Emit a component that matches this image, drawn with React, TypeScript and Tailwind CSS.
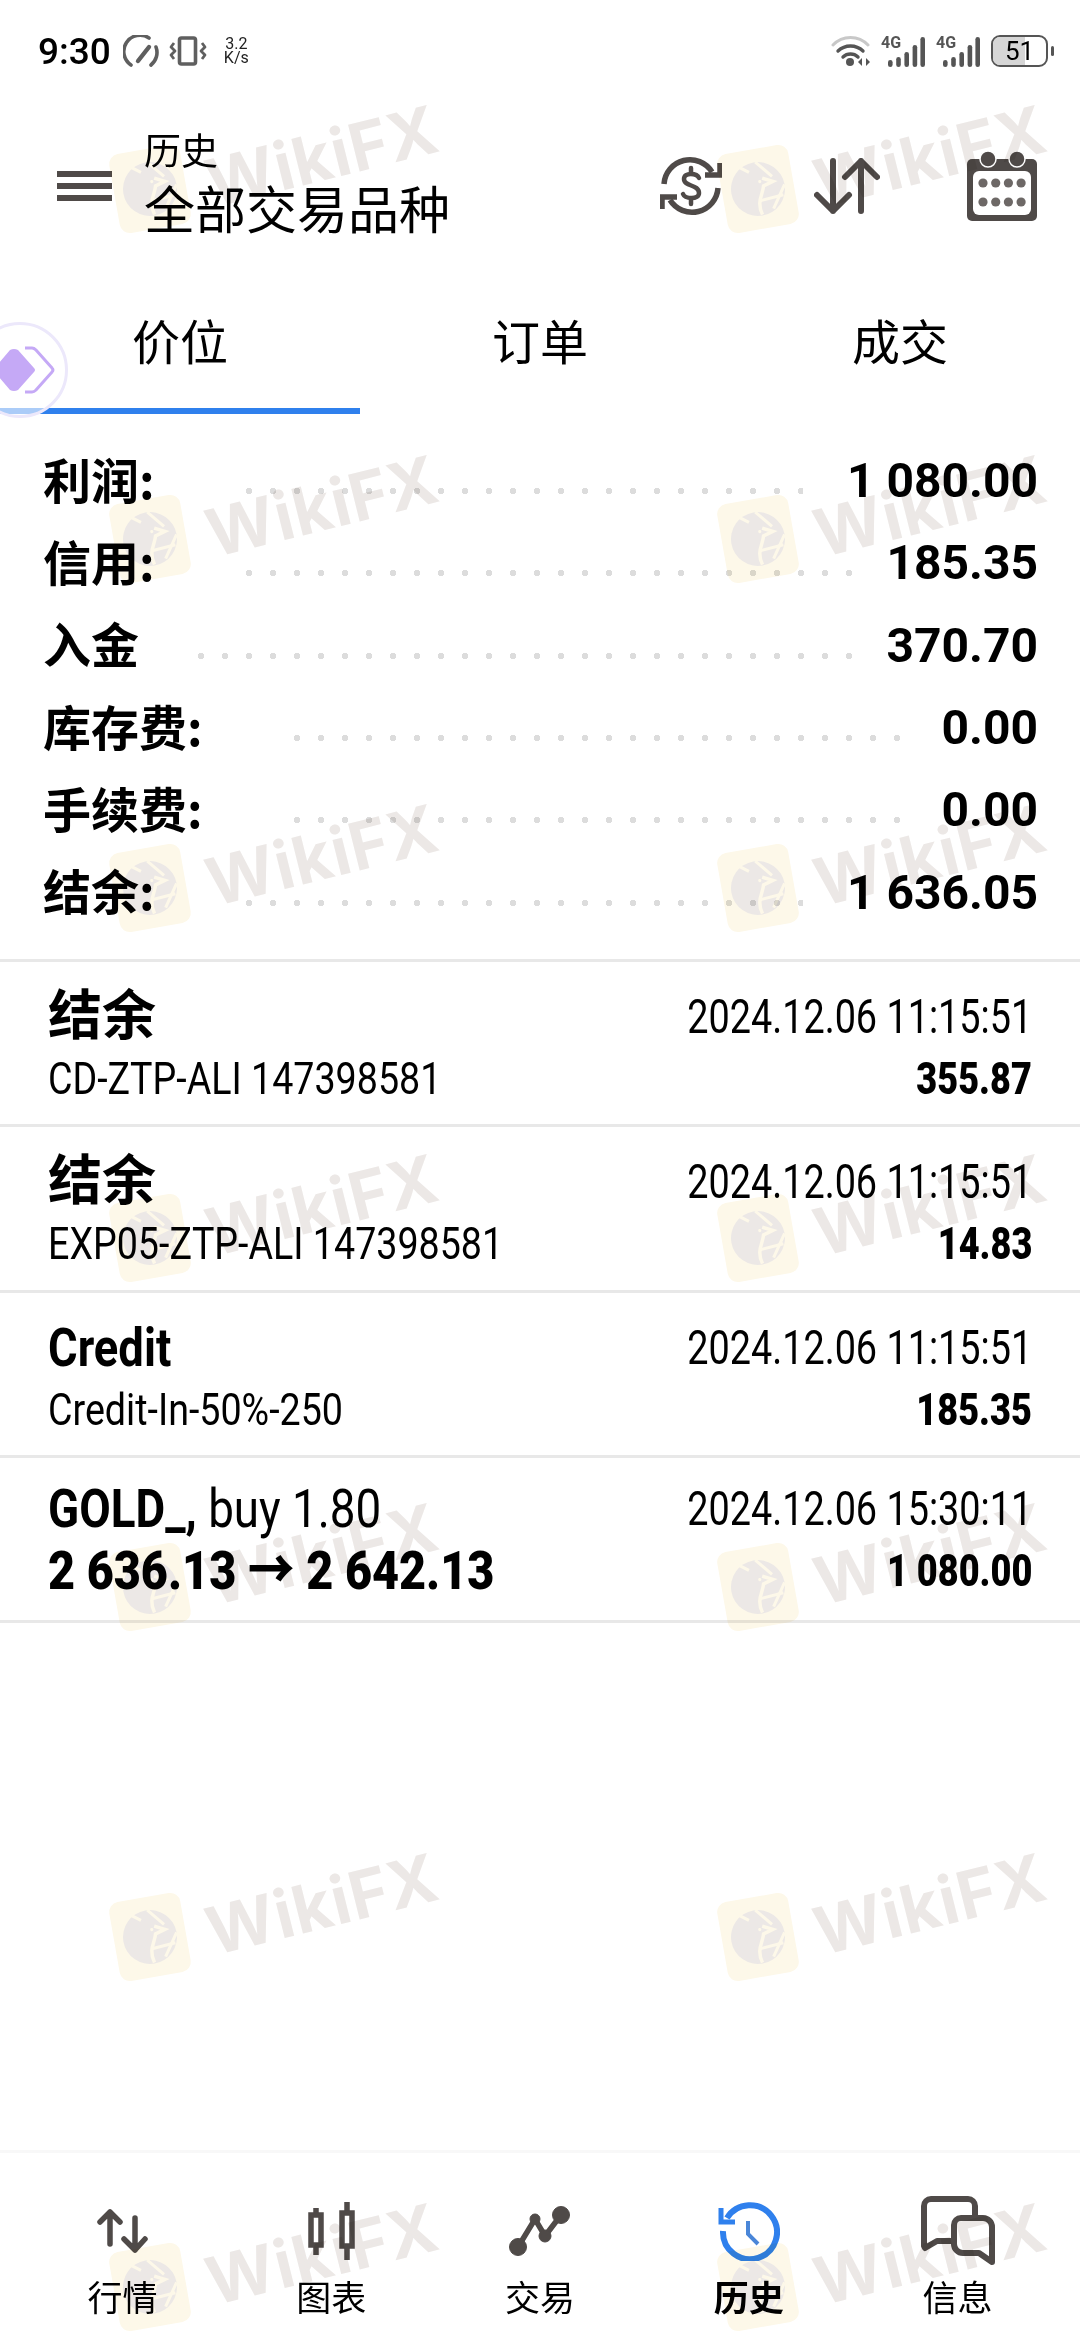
import React from 'react';

const latin = "font-['Roboto','Noto_Sans_CJK_SC',sans-serif]";
const cjk = "font-['Noto_Sans_CJK_SC',sans-serif]";

const summary = [
  { label: '利润:', value: '1 080.00', lead: 'ml-[82px] mr-[44px]' },
  { label: '信用:', value: '185.35', lead: 'ml-[82px] mr-[30px]' },
  { label: '入金', value: '370.70', lead: 'ml-[50px] mr-[30px]' },
  { label: '库存费:', value: '0.00', lead: 'ml-[82px] mr-[30px]' },
  { label: '手续费:', value: '0.00', lead: 'ml-[82px] mr-[30px]' },
  { label: '结余:', value: '1 636.05', lead: 'ml-[82px] mr-[44px]' },
];

const deals = [
  { title: '结余', sub: 'CD-ZTP-ALI 147398581', date: '2024.12.06 11:15:51', amount: '355.87', scaled: false },
  { title: '结余', sub: 'EXP05-ZTP-ALI 147398581', date: '2024.12.06 11:15:51', amount: '14.83', scaled: false },
  { title: 'Credit', sub: 'Credit-In-50%-250', date: '2024.12.06 11:15:51', amount: '185.35', scaled: true },
];

const SpeedIcon = () => (
  <svg width="36" height="32" viewBox="0 0 36 32" fill="none" stroke="#5f5f5f" strokeWidth="3.6" strokeLinecap="round">
    <path d="M8 30 A16 16 0 0 1 26 3" />
    <path d="M33 12 A16 16 0 0 1 28 30" />
    <path d="M15 26 L26 12" strokeWidth="4.4" />
  </svg>
);

const VibrateIcon = () => (
  <svg width="38" height="30" viewBox="0 0 38 30" fill="none" stroke="#5f5f5f" strokeWidth="2.8">
    <rect x="10.5" y="2" width="16" height="26" rx="2" strokeWidth="3.6" />
    <path d="M5 7 L2 11 L6 15 L2 19 L5 23" strokeLinejoin="round" />
    <path d="M33 7 L36 11 L32 15 L36 19 L33 23" strokeLinejoin="round" />
  </svg>
);

const WifiIcon = () => (
  <svg width="40" height="32" viewBox="0 0 40 32" fill="none" strokeLinecap="round">
    <path d="M2 10 A24 24 0 0 1 37 10" stroke="#c8c8c8" strokeWidth="3" />
    <path d="M7 16 A18 18 0 0 1 32 16" stroke="#555" strokeWidth="3.4" />
    <path d="M12 22 A11 11 0 0 1 27 22" stroke="#555" strokeWidth="3.4" />
    <circle cx="19" cy="27" r="4" fill="#555" />
    <path d="M27 27 L31 23 V31 Z M35 23 L39 27 L35 31 Z" fill="#555" />
  </svg>
);

const SignalIcon = () => (
  <div className="relative w-[44px] h-[31px]">
    <svg width="44" height="31" viewBox="0 0 44 31" fill="#555">
      <rect x="7" y="24" width="4.6" height="7" rx="2.3" />
      <rect x="15.2" y="21" width="4.6" height="10" rx="2.3" />
      <rect x="23.4" y="16" width="4.6" height="15" rx="2.3" />
      <rect x="31.6" y="9" width="4.6" height="22" rx="2.3" />
      <rect x="39.4" y="1" width="4.6" height="30" rx="2.3" />
    </svg>
    <span className={`absolute left-0 top-[-1px] text-[16px] leading-[16px] font-bold text-[#555] ${latin}`}>4G</span>
  </div>
);

const Battery = () => (
  <div className="flex items-center gap-[3px]">
    <div className="relative w-[57px] h-[32px] rounded-[9px] border-2 border-[#555] flex items-center justify-center">
      <div className="absolute left-0 top-0 bottom-0 w-[32px] rounded-l-[7px] bg-[#d6d6d6]" />
      <span className={`relative text-[26px] leading-[28px] text-black ${latin}`}>51</span>
    </div>
    <div className="w-[3px] h-[10px] rounded-full bg-[#555]" />
  </div>
);

const ExchangeIcon = () => (
  <svg width="62" height="62" viewBox="0 0 62 62" fill="none" stroke="#4f4a48" strokeWidth="5.5">
    <path d="M4 29 A26 26 0 0 1 52 17" />
    <path d="M58 33 A26 26 0 0 1 10 45" />
    <path d="M60 8 V20 H45" />
    <path d="M2 54 V42 H17" />
    <path d="M39 23 C37 18 24 17 24 24 C24 32 39 29 39 38 C39 45 25 44 23 39" strokeWidth="4.5" strokeLinecap="round" />
    <path d="M31 13 V17 M31 45 V49" strokeWidth="4.5" strokeLinecap="round" />
  </svg>
);

const SortIcon = () => (
  <svg width="66" height="56" viewBox="0 0 66 56" fill="none" stroke="#4f4a48" strokeWidth="6" strokeLinecap="round" strokeLinejoin="round">
    <path d="M19 3 V53 M3 37 L19 53 L35 37" />
    <path d="M47 53 V3 M31 19 L47 3 L63 19" />
  </svg>
);

const CalendarIcon = () => (
  <svg width="70" height="70" viewBox="0 0 70 70">
    <rect x="0" y="8" width="70" height="62" rx="5" fill="#4f4a48" />
    <circle cx="21" cy="8" r="8" fill="#4f4a48" stroke="#fff" strokeWidth="1.5" />
    <circle cx="50" cy="8" r="8" fill="#4f4a48" stroke="#fff" strokeWidth="1.5" />
    <rect x="6" y="20" width="58" height="44" rx="6" fill="#fff" />
    {[0, 1, 2, 3].map(i => (
      <g key={i} fill="#6d6866">
        <circle cx={16 + i * 12.7} cy="32" r="4.6" />
        <circle cx={16 + i * 12.7} cy="51" r="4.6" />
      </g>
    ))}
  </svg>
);

const QuotesIcon = () => (
  <svg width="51" height="44" viewBox="0 0 51 44" fill="none" stroke="#4f4a48" strokeWidth="5.5" strokeLinecap="round" strokeLinejoin="round">
    <path d="M13 3 V35 M3 13 L13 3 L23 13" />
    <path d="M38 9 V41 M27 30 L38 41 L48 30" />
  </svg>
);

const ChartIcon = () => (
  <svg width="47" height="58" viewBox="0 0 47 58" fill="none" stroke="#4f4a48" strokeWidth="5.5">
    <path d="M8 6 V13 M8 43 V53" />
    <rect x="3" y="13" width="10" height="30" />
    <path d="M39 0 V11 M39 44 V58" />
    <rect x="34" y="11" width="10" height="33" />
  </svg>
);

const TradeIcon = () => (
  <svg width="62" height="50" viewBox="0 0 62 50" fill="#4f4a48" stroke="#4f4a48">
    <path d="M9 41 L26 13 L36 30 L52 9" fill="none" strokeWidth="5.5" />
    <circle cx="9" cy="41" r="8.5" />
    <circle cx="26" cy="13" r="5" />
    <circle cx="36" cy="30" r="6" />
    <circle cx="52" cy="9" r="8.5" />
  </svg>
);

const HistoryIcon = () => (
  <svg width="62" height="60" viewBox="0 0 62 60" fill="none" stroke="#2f80ed" strokeWidth="6">
    <path d="M9 17 A27 27 0 1 1 5 30" />
    <path d="M3 7 V21 H17" strokeWidth="5" />
    <path d="M30 20 V33 L40 43" stroke="#4a86d8" strokeWidth="4" />
  </svg>
);

const MessagesIcon = () => (
  <svg width="74" height="70" viewBox="0 0 74 70" fill="none" stroke="#4f4a48" strokeWidth="6" strokeLinejoin="round">
    <path d="M54 22 V10 A7 7 0 0 0 47 3 H10 A7 7 0 0 0 3 10 V50 L4 52 L16 45 H30" />
    <path d="M40 22 H62 A9 9 0 0 1 71 31 V66 L58 57 H42 A9 9 0 0 1 33 48 V29 A7 7 0 0 1 40 22 Z" />
  </svg>
);

const EagleBadge = () => (
  <svg width="56" height="56" viewBox="0 0 56 56">
    <circle cx="28" cy="28" r="27" fill="#ece8e6" />
    <path d="M30 1 L44 18 M55 28 L40 50 M14 4 L22 10" stroke="#fdf8e9" strokeWidth="3" />
    <path d="M34 18 L44 23 L34 26 C32 34 24 40 28 54" fill="none" stroke="#fdf8e9" strokeWidth="3.5" />
    <path d="M28 40 L52 38" stroke="#fdf8e9" strokeWidth="3" />
    <circle cx="31" cy="21" r="1.6" fill="#fdf8e9" />
  </svg>
);

const Watermark = () => (
  <div className="relative h-[349.6px]">
    <div className="absolute left-0 top-[109px] w-[72px] h-[80px] rounded-[10px] bg-[#fdf8e9] -rotate-[10deg] flex items-center justify-center">
      <EagleBadge />
    </div>
    <div className="absolute left-[88px] top-[76px] w-[240px] text-center text-[66px] leading-[80px] font-bold tracking-[1px] text-[#ece8e6] -rotate-[14deg] font-['Inter',sans-serif]">
      WikiFX
    </div>
  </div>
);

export default function App() {
  return (
    <div className={`relative w-[1080px] h-[2340px] bg-white overflow-hidden flex flex-col text-black ${cjk}`}>
      {/* Status bar */}
      <div className="h-[102px] pl-[38px] pr-[26px] flex items-center justify-between">
        <div className="flex items-center">
          <span className={`text-[37px] leading-none font-medium ${latin}`}>9:30</span>
          <span className="ml-[12px]"><SpeedIcon /></span>
          <span className="ml-[10px]"><VibrateIcon /></span>
          <div className={`ml-[17px] flex flex-col items-center text-[16px] leading-[14px] text-[#222] ${latin}`}>
            <span>3.2</span>
            <span>K/s</span>
          </div>
        </div>
        <div className="flex items-center">
          <WifiIcon />
          <span className="ml-[10px]"><SignalIcon /></span>
          <span className="ml-[11px]"><SignalIcon /></span>
          <span className="ml-[11px]"><Battery /></span>
        </div>
      </div>

      {/* Header */}
      <div className="h-[168px] flex items-center pl-[57px]">
        <div className="w-[55px] flex flex-col gap-[6px]">
          <div className="h-[6px] bg-[#4f4a48]" />
          <div className="h-[6px] bg-[#4f4a48]" />
          <div className="h-[6px] bg-[#4f4a48]" />
        </div>
        <div className="ml-[32px] flex flex-col">
          <span className="text-[37px] leading-[44px] mt-[-2px]">历史</span>
          <span className="text-[51px] leading-[72px]">全部交易品种</span>
        </div>
        <div className="ml-auto flex items-center">
          <ExchangeIcon />
          <span className="ml-[92px]"><SortIcon /></span>
          <span className="ml-[87px] mr-[43px]"><CalendarIcon /></span>
        </div>
      </div>

      {/* Tabs */}
      <div className="relative h-[144px] grid grid-cols-3">
        <div className="flex flex-col">
          <div className="flex-1 flex items-center justify-center text-[48px]">价位</div>
          <div className="h-[6px] bg-[#2f80ed]" />
        </div>
        <div className="flex items-center justify-center text-[48px] pb-[6px]">订单</div>
        <div className="flex items-center justify-center text-[48px] pb-[6px]">成交</div>
      </div>

      {/* Summary */}
      <div className="pt-[25px] pl-[43px] pr-[42px] h-[545px]">
        {summary.map(row => (
          <div key={row.label} className="h-[82.3px] flex items-center">
            <span className="text-[48px] leading-none font-bold mt-[-5px]">{row.label}</span>
            <div className={`flex-1 h-[8px] mt-[22px] bg-[radial-gradient(circle,#dcdcdc_3px,transparent_3.5px)] bg-[length:24px_8px] ${row.lead}`} />
            <span className={`text-[48px] leading-none font-bold mt-[2px] ${latin}`}>{row.value}</span>
          </div>
        ))}
      </div>

      {/* Deals */}
      <div className="border-t-[3px] border-[#e8e8e8]">
        {deals.map(d => (
          <div key={d.sub} className="h-[165.3px] border-b-[3px] border-[#e8e8e8] pl-[48px] pr-[48px] flex flex-col justify-center pt-[2px]">
            <div className="flex items-center justify-between h-[70px]">
              <span className={`inline-block origin-left text-[54px] leading-none font-bold ${d.scaled ? 'scale-x-[0.84]' : ''} ${latin}`}>{d.title}</span>
              <span className={`inline-block origin-right scale-x-[0.787] text-[48px] leading-none ${latin}`}>{d.date}</span>
            </div>
            <div className="flex items-center justify-between h-[54px]">
              <span className={`inline-block origin-left scale-x-[0.855] text-[44px] leading-none ${latin}`}>{d.sub}</span>
              <span className={`inline-block origin-right scale-x-[0.82] text-[44px] leading-none font-black ${latin}`}>{d.amount}</span>
            </div>
          </div>
        ))}
        <div className="h-[165.3px] border-b-[3px] border-[#e8e8e8] pl-[48px] pr-[48px] flex flex-col justify-center pt-[2px]">
          <div className="flex items-center justify-between h-[62px]">
            <span className={`inline-block origin-left scale-x-[0.847] text-[54px] leading-none ${latin}`}><b>GOLD_,</b> buy 1.80</span>
            <span className={`inline-block origin-right scale-x-[0.787] text-[48px] leading-none ${latin}`}>2024.12.06 15:30:11</span>
          </div>
          <div className="flex items-center justify-between h-[62px]">
            <span className={`inline-block origin-left scale-x-[0.865] text-[54px] leading-none font-black ${latin}`}>2 636.13 → 2 642.13</span>
            <span className={`inline-block origin-right scale-x-[0.82] text-[44px] leading-none font-black ${latin}`}>1 080.00</span>
          </div>
        </div>
      </div>

      {/* Bottom nav */}
      <div className="mt-auto h-[190px] border-t-[3px] border-[#f8f8f8] pt-[33px] px-[18px] grid grid-cols-5">
        {[
          { icon: <QuotesIcon />, label: '行情' },
          { icon: <ChartIcon />, label: '图表' },
          { icon: <TradeIcon />, label: '交易' },
          { icon: <HistoryIcon />, label: '历史', active: true },
          { icon: <MessagesIcon />, label: '信息' },
        ].map(item => (
          <div key={item.label} className="flex flex-col items-center">
            <div className="h-[90px] flex items-center justify-center">{item.icon}</div>
            <span className={`text-[35px] leading-[40px] ${item.active ? 'font-bold' : ''}`}>{item.label}</span>
          </div>
        ))}
      </div>

      {/* Floating assistant ball */}
      <div className="absolute left-[-28px] top-[322px] w-[96px] h-[96px] rounded-full border-[3px] border-[#ece8fb] bg-white/60 flex items-center justify-center">
        <svg width="64" height="52" viewBox="0 0 64 52" className="ml-[20px]">
          <path d="M20 6 L36 24 Q38 26 36 28 L20 46 Q16 48 12 46 L0 32 V20 L12 6 Q16 4 20 6 Z" fill="#c5a9f6" />
          <path d="M27 4 H34 Q36 4 38 6 L54 24 Q56 26 54 28 L38 46 Q36 48 34 48 H27" fill="none" stroke="#c5a9f6" strokeWidth="3" />
        </svg>
      </div>

      {/* Watermark grid */}
      <div className="absolute left-[114px] top-[40px] grid grid-cols-[608px_358px] pointer-events-none mix-blend-multiply">
        {Array.from({ length: 14 }).map((_, i) => (
          <Watermark key={i} />
        ))}
      </div>
    </div>
  );
}
